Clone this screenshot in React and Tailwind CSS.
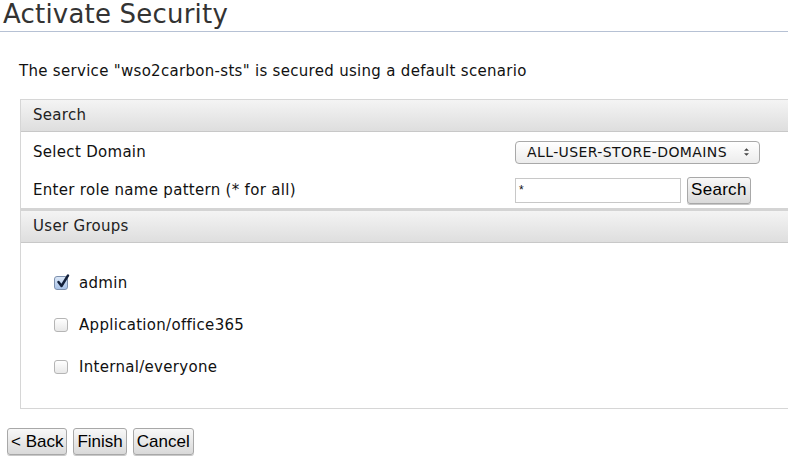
import React from 'react'

const lucida = { fontFamily: '"DejaVu Sans", "Lucida Grande", Verdana, sans-serif' }
const arial = { fontFamily: '"Liberation Sans", Arial, sans-serif' }

function Check({ checked }) {
  return (
    <span className={`relative inline-block w-[14px] h-[14px] rounded-[3px] border ${checked ? 'border-[#7d90ad] bg-gradient-to-b from-[#dbe7f7] to-[#a9c3e8]' : 'border-[#b5b5b5] bg-gradient-to-b from-white to-[#e8e8e8]'}`}>
      {checked && (
        <svg viewBox="0 0 14 14" className="absolute left-[1px] top-[-3px] w-[14px] h-[15px]">
          <path d="M2.5 7.5 L5.5 11.5 L12 1" fill="none" stroke="#13203a" strokeWidth="2.4" strokeLinecap="round" strokeLinejoin="round" />
        </svg>
      )}
    </span>
  )
}

function HeaderRow({ children }) {
  return (
    <div className="h-[32px] flex items-center pl-[12px] text-[15px] tracking-[0.3px] text-[#222] bg-gradient-to-b from-[#f4f4f4] to-[#dedede] border-b border-[#c8c8c8]">
      {children}
    </div>
  )
}

function Btn({ children }) {
  return (
    <button className="h-[27px] px-[3px] text-[17px] leading-[20px] text-black rounded-[3px] border border-[#a8a8a8] bg-gradient-to-b from-[#f8f8f8] to-[#d9d9d9] shadow-[0_1px_0_#c8c8c8]" style={arial}>
      {children}
    </button>
  )
}

export default function App() {
  const groups = [
    { name: 'admin', checked: true },
    { name: 'Application/office365', checked: false },
    { name: 'Internal/everyone', checked: false },
  ]

  return (
    <div className="w-[788px] h-[471px] overflow-hidden bg-white" style={lucida}>
      {/* Title */}
      <div className="pl-[3px] h-[32px] border-b border-[#b6c1d4]">
        <h1 className="text-[26px] leading-[28px] tracking-[0.2px] text-[#333]">Activate Security</h1>
      </div>

      <p className="pl-[19px] mt-[30px] text-[15px] leading-[18px] tracking-[0.3px] text-[#111]">
        The service "wso2carbon-sts" is secured using a default scenario
      </p>

      {/* Panel */}
      <div className="ml-[20px] mt-[19px] w-[800px] border-l border-t border-b border-[#d6d6d6] text-[15px] tracking-[0.3px] text-[#111]">
        <HeaderRow>Search</HeaderRow>
        <div className="flex items-center h-[40px] pl-[12px]">
          <span className="flex-1">Select Domain</span>
          <div className="w-[305px]">
            <div className="w-[245px] h-[23px] flex items-center justify-between pl-[11px] pr-[9px] rounded-[4px] border border-[#a9a9a9] bg-gradient-to-b from-white to-[#ececec] text-[14px] tracking-[0.4px] text-[#111]">
              <span>ALL-USER-STORE-DOMAINS</span>
              <svg viewBox="0 0 8 12" className="w-[7px] h-[10px]">
                <path d="M1 4.5 L4 1.5 L7 4.5 Z M1 7.5 L4 10.5 L7 7.5 Z" fill="#444" />
              </svg>
            </div>
          </div>
        </div>
        <div className="flex items-center h-[39px] pl-[12px] border-b-[3px] border-[#d4d4d4]">
          <span className="flex-1">Enter role name pattern (* for all)</span>
          <div className="w-[305px] flex items-center gap-[6px]">
            <div className="w-[166px] h-[25px] border border-[#c8c8c8] pl-[3px] text-[12px] leading-[22px]" style={arial}>*</div>
            <Btn>Search</Btn>
          </div>
        </div>
        <HeaderRow>User Groups</HeaderRow>
        <div className="pl-[33px] pt-[30px] pb-[31px] flex flex-col gap-[22px]">
          {groups.map(g => (
            <label key={g.name} className="flex items-center gap-[11px] h-[20px]">
              <Check checked={g.checked} />
              <span>{g.name}</span>
            </label>
          ))}
        </div>
      </div>

      {/* Buttons */}
      <div className="flex gap-[6px] pl-[7px] mt-[19px]">
        <Btn>&lt; Back</Btn>
        <Btn>Finish</Btn>
        <Btn>Cancel</Btn>
      </div>
    </div>
  )
}
